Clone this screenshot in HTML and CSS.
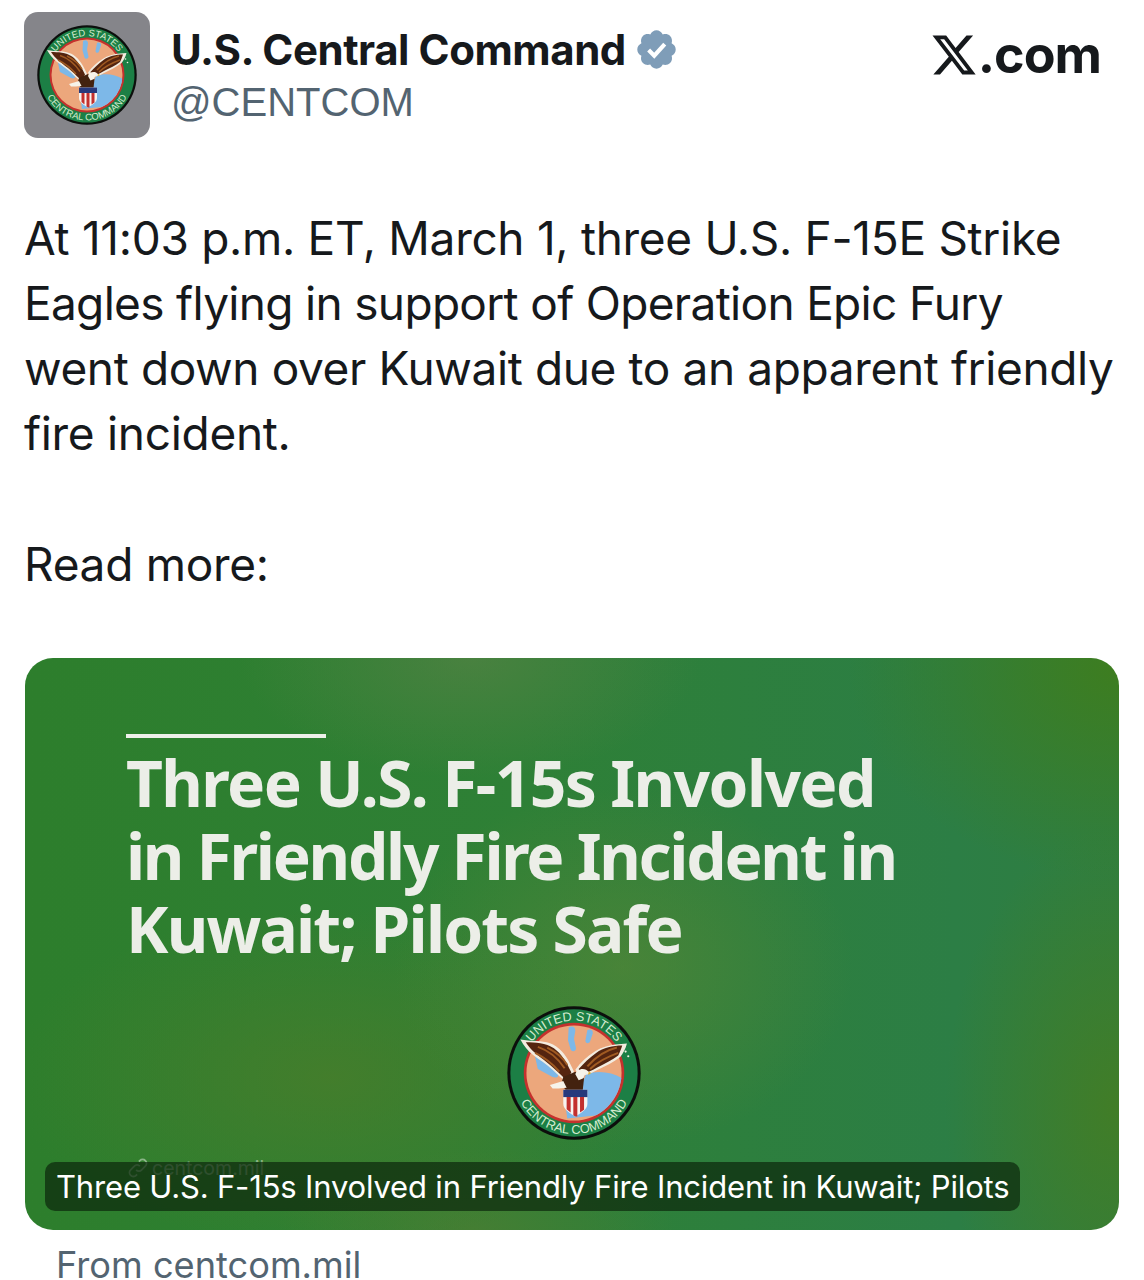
FILE: index.html
```html
<!DOCTYPE html>
<html lang="en">
<head>
<meta charset="utf-8">
<title>U.S. Central Command on X</title>
<link rel="stylesheet" href="styles.css">
</head>
<body>
<svg class="defs" width="0" height="0" aria-hidden="true">
  <symbol id="emblem" viewBox="0 0 200 200">
    <defs>
      <path id="arc-top" d="M22 100a78 78 0 0 1 156 0"/>
      <path id="arc-bottom" d="M9 100a91 91 0 0 0 182 0"/>
      <clipPath id="inner"><circle cx="100" cy="100" r="71"/></clipPath>
    </defs>
    <circle cx="100" cy="100" r="99.5" fill="#0c0f0c"/>
    <circle cx="100" cy="100" r="95" fill="#1c7f45"/>
    <circle cx="100" cy="100" r="75" fill="#c5312d"/>
    <circle cx="100" cy="100" r="71" fill="#eca77c"/>
    <g clip-path="url(#inner)" fill="#7db8e8">
      <path d="M92 32c5-3 10-1 10 5l-2 12 3 14c0 5-6 6-8 2l-4-14z"/>
      <path d="M120 36c4-2 9 0 8 5l-4 12c-2 4-7 3-7-1z"/>
      <path d="M42 76c4-4 10-2 14 2l20 22c2 6-2 8-8 6L46 94z"/>
      <path d="M118 102c16-6 38-4 54 6l-2 28-24 26-56 6-4-28 14-12c8-6 14-14 18-26z"/>
    </g>
    <path d="M20 50l14 2c14 0 28 1 39 8 12 8 20 22 27 38l-9 16c-8-4-15-11-23-19-10-9-20-15-29-22-8-6-14-14-19-23z" fill="#f3ece0"/>
    <path d="M28 54c14 0 30 1 42 9 11 8 19 21 26 36l-6 12c-7-5-13-12-21-19-9-8-19-15-26-21-6-5-11-11-15-17z" fill="#54240f"/>
    <path d="M46 61c12 4 28 14 40 32M60 62c8 4 22 12 30 26M42 70c12 6 26 16 36 28" fill="none" stroke="#a05a22" stroke-width="3"/>
    <path d="M179 56l-13 1c-12 1-25 4-35 11-11 7-21 16-29 27l6 10c9-1 17-4 26-9 12-6 25-12 35-20 4-5 8-12 10-20z" fill="#f3ece0"/>
    <path d="M172 59c-14 0-28 3-39 11-10 7-18 15-26 24l4 8c8-2 16-6 23-10 12-6 23-11 32-18 2-4 4-9 6-15z" fill="#54240f"/>
    <path d="M164 62c-12 3-28 10-44 28M166 70c-14 5-28 11-42 24" fill="none" stroke="#a05a22" stroke-width="3"/>
    <path d="M84 106l18-8 13 10-2 18-14 6-11-6-7-10z" fill="#43220f"/>
    <path d="M102 102c1-6 9-10 16-7l5 4-7 3-2 6-7 3z" fill="#f6f3ea"/>
    <path d="M122 98l4 2-5 3z" fill="#e2b02a"/>
    <path d="M64 118l20-6 5 10-12 1-9 0z" fill="#f6f3ea"/>
    <path d="M84 125h36v21c0 9-10 14-18 19-8-5-18-10-18-19z" fill="#f7f4f0"/>
    <path d="M84 125h36v11H84z" fill="#27397c"/>
    <path d="M89 136h6v23l-6-5zM99 136h6v29l-3 0-3-2zM109 136h6v19l-6 4z" fill="#c3302e"/>
    <circle cx="177" cy="68" r="1.6" fill="#f5efe4"/>
    <circle cx="181" cy="75" r="1.6" fill="#f5efe4"/>
    <text class="emblem-text" font-size="19"><textPath href="#arc-top" startOffset="50%" text-anchor="middle">UNITED STATES</textPath></text>
    <text class="emblem-text" font-size="19"><textPath href="#arc-bottom" startOffset="50%" text-anchor="middle">CENTRAL COMMAND</textPath></text>
  </symbol>
</svg>

<main class="post">
  <header class="head">
    <div class="avatar"><svg class="avatar-mark"><use href="#emblem"/></svg></div>
    <div class="who">
      <div class="name-row">
        <span class="name">U.S. Central Command</span>
        <svg class="badge" viewBox="0 0 24 24"><path fill="#7f9db8" d="M22.25 12c0-1.43-.88-2.67-2.19-3.34.46-1.39.2-2.9-.81-3.91s-2.52-1.27-3.91-.81C14.67 2.63 13.43 1.75 12 1.75s-2.66.88-3.33 2.19c-1.4-.46-2.91-.2-3.92.81s-1.26 2.52-.8 3.91C2.63 9.33 1.75 10.57 1.75 12s.88 2.67 2.2 3.34c-.46 1.39-.21 2.9.8 3.91s2.52 1.26 3.91.81c.67 1.31 1.91 2.19 3.34 2.19s2.67-.88 3.33-2.19c1.4.45 2.91.2 3.92-.81s1.27-2.52.81-3.91c1.31-.67 2.19-1.91 2.19-3.34z"/><path fill="none" stroke="#fff" stroke-width="2.2" d="M7.8 12.3l3 3 5.6-6.2"/></svg>
      </div>
      <div class="handle">@CENTCOM</div>
    </div>
    <div class="site">
      <svg class="x-logo" viewBox="0 0 24 24"><path fill="#16191c" d="M18.244 2.25h3.308l-7.227 8.26 8.502 11.24H16.17l-5.214-6.817L4.99 21.75H1.68l7.73-8.835L1.254 2.25H8.08l4.713 6.231zm-1.161 17.52h1.833L7.084 4.126H5.117z"/></svg><span class="site-text">.com</span>
    </div>
  </header>

  <p class="tweet"><span class="line">At 11:03 p.m. ET, March 1, three U.S. F-15E Strike</span><span class="line snug">Eagles flying in support of Operation Epic Fury</span><span class="line near">went down over Kuwait due to an apparent friendly</span><span class="line">fire incident.</span></p>
  <p class="tweet more">Read more:</p>

  <section class="card">
    <div class="rule"></div>
    <h1 class="headline"><span class="line">Three U.S. F-15s Involved</span><span class="line tight">in Friendly Fire Incident in</span><span class="line close">Kuwait; Pilots Safe</span></h1>
    <svg class="card-mark"><use href="#emblem"/></svg>
    <div class="source">
      <svg class="link" viewBox="0 0 24 24"><path fill="none" stroke="currentColor" stroke-width="2" d="M10 14a4 4 0 0 0 6 0l4-4a4 4 0 0 0-6-6l-1 1M14 10a4 4 0 0 0-6 0l-4 4a4 4 0 0 0 6 6l1-1"/></svg>
      <span>centcom.mil</span>
    </div>
    <div class="caption">Three U.S. F-15s Involved in Friendly Fire Incident in Kuwait; Pilots</div>
  </section>
  <div class="from">From centcom.mil</div>
</main>
</body>
</html>
```

FILE: styles.css
```css
* { box-sizing: border-box; }
html, body { margin: 0; background: #fff; }
body { height: 1280px; overflow: hidden; font-family: Inter, "Liberation Sans", sans-serif; color: #16191c; }
.defs { position: absolute; }
.post { padding: 12px 25px 0 24px; }
.head { display: flex; align-items: flex-start; }
.avatar { width: 126px; height: 126px; border-radius: 14px; background: #85858a; display: flex; align-items: center; justify-content: center; flex: none; }
.avatar-mark { width: 100px; height: 100px; }
.who { margin-left: 21px; padding-top: 12px; flex: 1; }
.name-row { display: flex; align-items: center; height: 50px; }
.name { font-size: 42px; font-weight: 700; letter-spacing: -0.45px; }
.badge { width: 45px; height: 45px; margin-left: 8px; }
.handle { font-size: 40px; line-height: 50px; color: #536471; font-family: "Liberation Sans", sans-serif; margin-top: 3px; }
.site { display: flex; align-items: center; padding: 16px 18px 0 0; height: 70px; }
.x-logo { width: 48px; height: 48px; }
.site-text { font-size: 52px; font-weight: 700; letter-spacing: -1px; line-height: 56px; }
.tweet { margin: 0; font-size: 46px; line-height: 65px; letter-spacing: -0.3px; }
.tweet:first-of-type { margin-top: 68px; }
.more { margin-top: 66px; }
.line { display: block; white-space: nowrap; }
.snug { letter-spacing: -0.68px; }
.near { letter-spacing: -0.38px; }
.card { position: relative; height: 572px; margin-top: 61px; margin-left: 1px; border-radius: 28px; overflow: hidden; padding: 76px 0 0 101px;
  background:
    radial-gradient(ellipse 230px 120px at 445px 0, rgba(84,130,68,.7), transparent),
    radial-gradient(ellipse 230px 180px at 598px 309px, rgba(90,135,55,.6), transparent),
    radial-gradient(ellipse 320px 170px at 305px 420px, rgba(72,125,42,.8), transparent),
    radial-gradient(ellipse 200px 80px at 450px 572px, rgba(78,125,50,.7), transparent),
    radial-gradient(ellipse 270px 210px at 1094px 10px, rgba(62,125,30,.95), transparent),
    radial-gradient(ellipse 170px 280px at 1090px 449px, rgba(66,125,38,.95), transparent),
    linear-gradient(90deg, #2d7e2c, #2e8036 45%, #2c7e45 85%, #2f7e40); }
.rule { width: 200px; height: 4px; background: #eef0ea; }
.headline { margin: 8px 0 0; font-family: "Noto Sans", sans-serif; font-weight: 700; font-size: 64px; line-height: 73px; letter-spacing: -1.6px; color: #eceee8; }
.tight { letter-spacing: -2.27px; }
.close { letter-spacing: -1.8px; }
.card-mark { display: block; width: 134px; height: 134px; margin: 41px 0 0 381px; }
.source { position: absolute; left: 102px; top: 498px; display: flex; align-items: center; gap: 3px; color: rgba(225,235,225,.5); font-size: 19.5px; }
.link { width: 22px; height: 22px; }
.caption { position: absolute; left: 20px; top: 504px; height: 49px; padding: 0 11px; line-height: 49px; border-radius: 10px; background: rgba(12,40,12,.72); color: #fff; font-size: 31px; letter-spacing: -0.17px; white-space: nowrap; }
.from { font-size: 36.2px; line-height: 30px; color: #536471; padding-left: 32px; margin-top: 20px; }
.emblem-text { font-family: "Liberation Sans", sans-serif; fill: #d6ecd0; }
```
